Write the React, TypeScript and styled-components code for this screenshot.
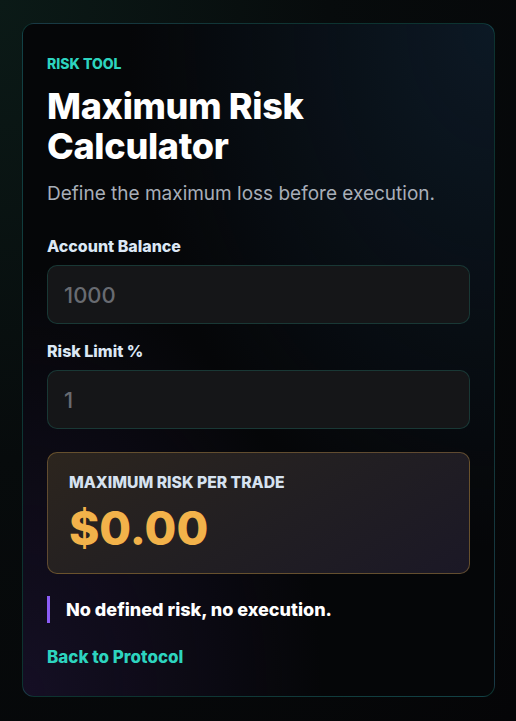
import React, { useState } from 'react'
import styled, { createGlobalStyle } from 'styled-components'

const GlobalStyle = createGlobalStyle`
  html, body {
    margin: 0;
    padding: 0;
    height: 100%;
  }
  body {
    background: radial-gradient(ellipse at 0% 0%, #0b1a17 0%, #070b0c 45%, #050507 100%);
    font-family: Inter, "Noto Sans", sans-serif;
    color: #f5f7fa;
  }
  #root {
    min-height: 100%;
  }
`

const Page = styled.div`
  min-height: 721px;
  box-sizing: border-box;
  padding: 23px 22px 26px;
`

const Card = styled.section`
  box-sizing: border-box;
  width: 473px;
  border: 1px solid rgba(45, 212, 191, 0.22);
  border-radius: 12px;
  padding: 31px 24px 29px;
  background:
    radial-gradient(ellipse at 100% 0%, rgba(18, 40, 60, 0.55) 0%, rgba(10, 20, 30, 0) 55%),
    radial-gradient(ellipse at 0% 100%, rgba(40, 26, 70, 0.45) 0%, rgba(20, 14, 36, 0) 45%),
    #050608;
  display: flex;
  flex-direction: column;
`

const Eyebrow = styled.div`
  color: #2dd4bf;
  font-size: 14px;
  font-weight: 800;
  line-height: 17px;
  text-transform: uppercase;
`

const Title = styled.h1`
  margin: 14px 0 0;
  max-width: 400px;
  font-size: 36px;
  font-weight: 800;
  line-height: 40px;
  letter-spacing: -0.3px;
  color: #ffffff;
`

const Subtitle = styled.p`
  margin: 15px 0 0;
  font-size: 19px;
  line-height: 26px;
  color: #a8aeb8;
`

const Field = styled.label<{ $first?: boolean }>`
  display: flex;
  flex-direction: column;
  gap: 9px;
  margin-top: ${p => (p.$first ? 30 : 18)}px;
`

const FieldLabel = styled.span`
  font-size: 16px;
  font-weight: 800;
  line-height: 19px;
  color: #dce8f5;
`

const Input = styled.input`
  box-sizing: border-box;
  width: 100%;
  height: 59px;
  padding: 0 16px;
  border: 1px solid rgba(45, 212, 191, 0.18);
  border-radius: 10px;
  background: #151618;
  color: #e5e7eb;
  font-family: Inter, "Noto Sans", sans-serif;
  font-size: 22px;
  font-weight: 500;
  outline: none;

  &::placeholder {
    color: #686b71;
  }
`

const ResultBox = styled.div`
  box-sizing: border-box;
  margin-top: 23px;
  padding: 20px 21px 18px;
  border: 1px solid rgba(240, 180, 76, 0.32);
  border-radius: 10px;
  background: linear-gradient(150deg, #2c251e 0%, #221f22 50%, #1b1826 100%);
`

const ResultLabel = styled.div`
  font-size: 15.7px;
  font-weight: 800;
  line-height: 19px;
  color: #d6e2f0;
  text-transform: uppercase;
`

const ResultValue = styled.div`
  margin-top: 9px;
  font-size: 46px;
  font-weight: 800;
  line-height: 54px;
  color: #f2b24a;
`

const Quote = styled.blockquote`
  margin: 22px 0 0;
  padding: 2px 0 2px 16px;
  border-left: 3px solid #8b5cf6;
  font-size: 18px;
  font-weight: 800;
  line-height: 23px;
  color: #ffffff;
`

const BackLink = styled.a`
  margin-top: 24px;
  align-self: flex-start;
  color: #2dd4bf;
  font-size: 17px;
  font-weight: 800;
  line-height: 20px;
  text-decoration: none;
`

const formatUsd = (n: number) =>
  '$' + n.toLocaleString('en-US', { minimumFractionDigits: 2, maximumFractionDigits: 2 })

const App: React.FC = () => {
  const [balance, setBalance] = useState('')
  const [limit, setLimit] = useState('')

  const risk = (Number(balance) || 0) * (Number(limit) || 0) / 100

  return (
    <>
      <GlobalStyle />
      <Page>
        <Card>
          <Eyebrow>Risk Tool</Eyebrow>
          <Title>Maximum Risk Calculator</Title>
          <Subtitle>Define the maximum loss before execution.</Subtitle>

          <Field $first>
            <FieldLabel>Account Balance</FieldLabel>
            <Input
              type="number"
              placeholder="1000"
              value={balance}
              onChange={e => setBalance(e.target.value)}
            />
          </Field>

          <Field>
            <FieldLabel>Risk Limit %</FieldLabel>
            <Input
              type="number"
              placeholder="1"
              value={limit}
              onChange={e => setLimit(e.target.value)}
            />
          </Field>

          <ResultBox>
            <ResultLabel>Maximum Risk Per Trade</ResultLabel>
            <ResultValue>{formatUsd(risk)}</ResultValue>
          </ResultBox>

          <Quote>No defined risk, no execution.</Quote>

          <BackLink href="#">Back to Protocol</BackLink>
        </Card>
      </Page>
    </>
  )
}

export default App
